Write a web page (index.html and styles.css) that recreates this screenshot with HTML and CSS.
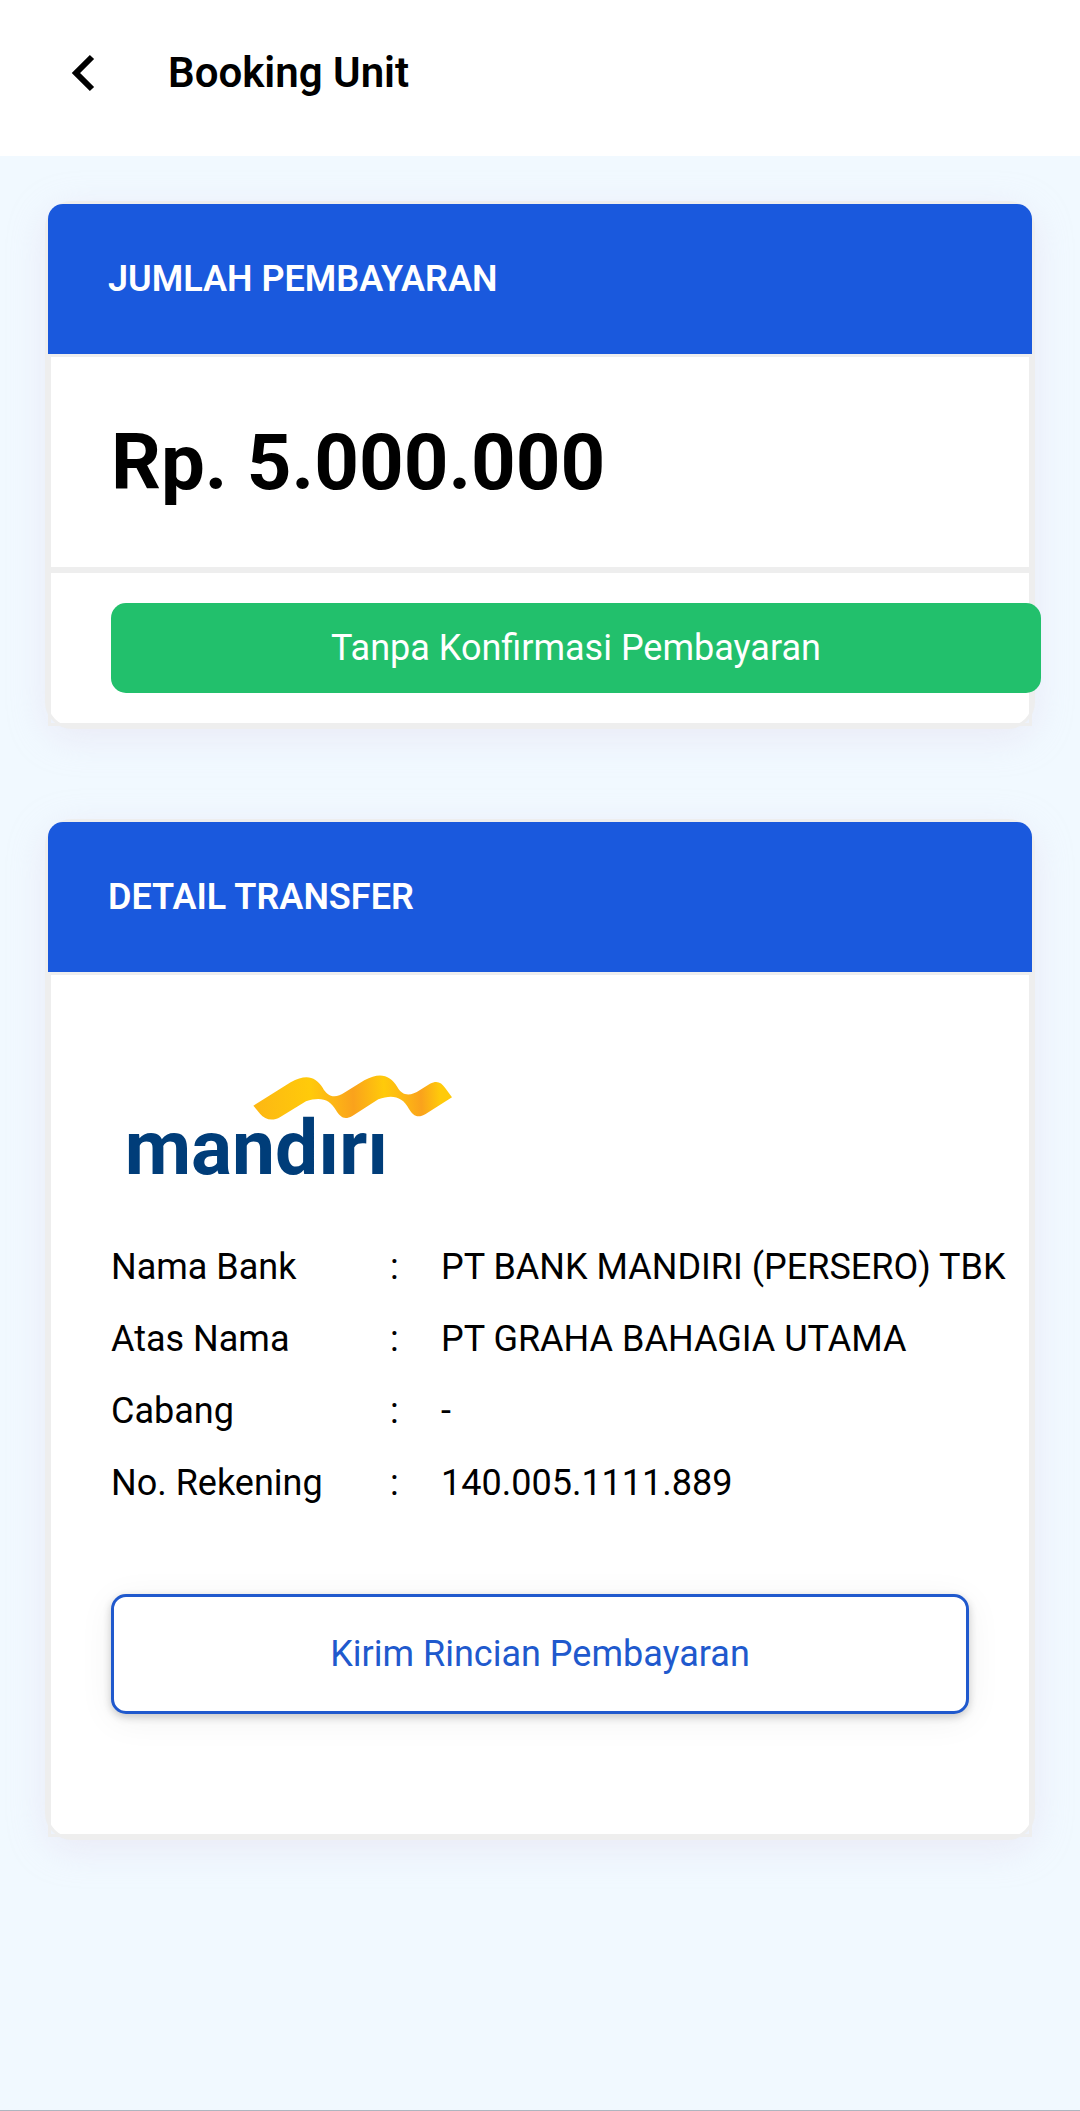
FILE: index.html
```html
<!DOCTYPE html>
<html lang="id">
<head>
<meta charset="utf-8">
<meta name="viewport" content="width=device-width, initial-scale=1">
<title>Booking Unit</title>
<link rel="stylesheet" href="styles.css">
</head>
<body class="page">
<header class="topbar">
  <button class="back" type="button" aria-label="Kembali">
    <svg class="back-icon" viewBox="0 0 48 48" aria-hidden="true"><path d="M32 8 16 24l16 16" fill="none" stroke="#000" stroke-width="6"/></svg>
  </button>
  <h1 class="title">Booking Unit</h1>
</header>
<main class="content">
  <section class="card">
    <h2 class="card-header">JUMLAH PEMBAYARAN</h2>
    <div class="card-body">
      <p class="amount">Rp. 5.000.000</p>
      <div class="action">
        <button class="confirm" type="button">Tanpa Konfirmasi Pembayaran</button>
      </div>
    </div>
  </section>
  <section class="card">
    <h2 class="card-header">DETAIL TRANSFER</h2>
    <div class="card-body transfer">
      <svg class="logo" viewBox="33 60 1050 360" role="img" aria-label="mandiri">
        <defs>
          <linearGradient id="ribbon" gradientUnits="userSpaceOnUse" x1="470" y1="200" x2="1050" y2="170">
            <stop offset="0" stop-color="#fdb813"/>
            <stop offset=".28" stop-color="#ffca0a"/>
            <stop offset=".4" stop-color="#fdb515"/>
            <stop offset=".5" stop-color="#faa21c"/>
            <stop offset=".66" stop-color="#ffca0a"/>
            <stop offset=".77" stop-color="#fdb515"/>
            <stop offset=".85" stop-color="#faa21c"/>
            <stop offset=".95" stop-color="#ffca0a"/>
          </linearGradient>
        </defs>
        <path fill="url(#ribbon)" d="M460 197 572 127C618 101 646 109 668 143C682 169 704 178 735 157L793 121C841 95 870 106 892 141C906 167 930 171 960 150L990 131C1012 120 1024 128 1035 143L1056 172 977 222C952 237 939 226 927 207C907 170 878 163 835 178L757 228C732 242 721 231 708 211C690 177 660 169 618 184L541 231C517 245 495 239 480 221Z"/>
        <text class="logo-text" x="74" y="403">mandırı</text>
      </svg>
      <table class="details">
        <tr><th scope="row">Nama Bank</th><td class="colon">:</td><td>PT BANK MANDIRI (PERSERO) TBK</td></tr>
        <tr><th scope="row">Atas Nama</th><td class="colon">:</td><td>PT GRAHA BAHAGIA UTAMA</td></tr>
        <tr><th scope="row">Cabang</th><td class="colon">:</td><td>-</td></tr>
        <tr><th scope="row">No. Rekening</th><td class="colon">:</td><td>140.005.1111.889</td></tr>
      </table>
      <button class="send" type="button">Kirim Rincian Pembayaran</button>
    </div>
  </section>
</main>
</body>
</html>
```
FILE: styles.css
```css
* {
  box-sizing: border-box;
}

.page {
  display: flex;
  flex-direction: column;
  min-height: 100vh;
  margin: 0;
  border-bottom: 1px solid #adb5bf;
  background: #f1f9ff;
  color: #000;
  font-family: Roboto, sans-serif;
  font-size: 36px;
  line-height: 48px;
}

.topbar {
  display: flex;
  align-items: center;
  gap: 60px;
  height: 156px;
  padding: 0 60px 10px;
  background: #fff;
}

.back {
  display: flex;
  padding: 0;
  border: 0;
  background: none;
}

.back-icon {
  width: 48px;
  height: 48px;
}

.title {
  margin: 0;
  font-size: 42px;
  font-weight: 600;
}

.content {
  display: flex;
  flex-direction: column;
  gap: 90px;
  padding: 45px;
}

.card {
  border: 3px solid #eee;
  border-radius: 27px;
  background: #fff;
  box-shadow: 0 9px 36px rgba(220, 205, 230, 0.35);
}

.card-header {
  margin: 0;
  padding: 51px 60px;
  border-radius: 15px 15px 0 0;
  background: #1a59dd;
  color: #fff;
  font-size: 36px;
  font-weight: 600;
}

.card-body {
  border: 3px solid #eee;
}

.amount {
  margin: 0;
  padding: 58px 60px 56px;
  border-bottom: 6px solid #eee;
  font-size: 78px;
  font-weight: 700;
  line-height: 96px;
}

.action {
  padding: 30px 60px;
}

/* The button runs past the right edge of its card. */
.confirm {
  display: block;
  width: calc(100% + 72px);
  height: 90px;
  border: 0;
  border-radius: 15px;
  background: #22c06c;
  color: #fff;
  font: inherit;
}

.transfer {
  padding: 85px 20px 120px 60px;
}

.logo {
  display: block;
  width: 350px;
  height: 120px;
  margin-bottom: 51px;
}

.logo-text {
  fill: #003d79;
  font-family: Roboto, sans-serif;
  font-size: 230px;
  font-weight: 700;
}

.details {
  border-collapse: collapse;
  white-space: nowrap;
}

.details th,
.details td {
  height: 72px;
  padding: 0;
  font-weight: 400;
  text-align: left;
}

.details th {
  width: 279px;
}

.details .colon {
  width: 51px;
}

.send {
  display: block;
  width: calc(100% - 40px);
  height: 120px;
  margin-top: 75px;
  border: 3px solid #2059cd;
  border-radius: 15px;
  background: #fff;
  box-shadow: 0 3px 9px rgba(0, 0, 0, 0.2), 0 6px 36px rgba(0, 0, 0, 0.06);
  color: #2059cd;
  font: inherit;
}
```
